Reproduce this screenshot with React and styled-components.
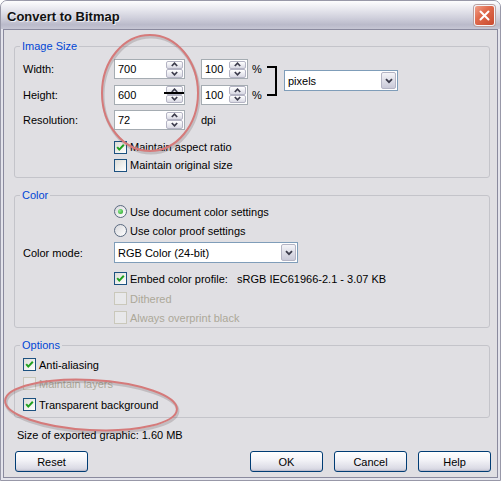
import React from 'react';
import styled, { createGlobalStyle } from 'styled-components';

const Global = createGlobalStyle`
  html, body { margin: 0; padding: 0; background: #ffffff; }
  body { font-family: "Liberation Sans", Arial, sans-serif; font-size: 11px; color: #000; }
  * { box-sizing: border-box; }
`;

const Window = styled.div`
  position: relative;
  width: 501px;
  height: 481px;
  display: flex;
  flex-direction: column;
  border: 1px solid #9898a8;
  border-radius: 7px 7px 0 0;
  overflow: hidden;
  background: #e4e4ec;
`;

const TitleBar = styled.div`
  height: 28px;
  flex: none;
  display: flex;
  align-items: center;
  padding: 2px 5px 0 6px;
  background: linear-gradient(#fdfdfe 0%, #ebebf1 25%, #d0d0dc 60%, #babaca 85%, #c6c6d4 100%);
`;

const Title = styled.div`
  font-family: "Liberation Sans", Arial, sans-serif;
  font-weight: bold;
  font-size: 13px;
  color: #111;
  text-shadow: 1px 1px 0 rgba(255, 255, 255, 0.7);
`;

const CloseButton = styled.div`
  margin-left: auto;
  width: 21px;
  height: 21px;
  margin-top: -1px;
  border: 1px solid #f4f4f8;
  border-radius: 3px;
  background: linear-gradient(135deg, #f0a08a 0%, #e06a4c 40%, #c84a30 100%);
  display: flex;
  align-items: center;
  justify-content: center;
  box-shadow: 0 0 0 1px #b9a0a0;
`;

const Frame = styled.div`
  flex: 1;
  display: flex;
  padding: 0 2px 2px 2px;
  background: #e4e4ec;
`;

const Content = styled.div`
  position: relative;
  flex: 1;
  display: flex;
  flex-direction: column;
  border: 1px solid #8a8a9e;
  background: #e0dfe3;
  padding: 10px 7px 0 10px;
`;

const Group = styled.fieldset`
  margin: ${p => p.$mt || 0}px 0 0 0;
  padding: ${p => p.$pad};
  border: 1px solid #c4c4ca;
  border-radius: 3px;
  min-width: 0;
`;

const Legend = styled.legend`
  padding: 0 2px;
  margin-left: -3px;
  color: #0046d5;
  font-size: 11px;
  line-height: 13px;
`;

const SizeGrid = styled.div`
  display: grid;
  grid-template-columns: 91px 87px 51px 15px 17px 114px;
  grid-template-rows: 20px 21px 20px;
  row-gap: 5px;
  align-items: center;
`;

const Label = styled.span`
  white-space: nowrap;
  color: ${p => (p.$disabled ? '#aca899' : '#000')};
`;

const SpinBox = styled.div`
  width: ${p => p.$w}px;
  height: 20px;
  border: 1px solid #a5acb2;
  background: #fff;
  display: flex;
  align-items: center;
  padding: 0 1px 0 3px;
`;

const SpinValue = styled.span`
  flex: 1;
`;

const SpinButtons = styled.div`
  width: 17px;
  height: 17px;
  display: flex;
  flex-direction: column;
`;

const SpinBtn = styled.div`
  flex: 1;
  border: 1px solid #b4b4c4;
  border-radius: 2px;
  background: linear-gradient(#ffffff, #d9d9e4);
  display: flex;
  align-items: center;
  justify-content: center;
`;

const Bracket = styled.div`
  grid-column: 5;
  grid-row: 1 / 3;
  align-self: center;
  width: 10px;
  height: 30px;
  margin-top: -3px;
  border: 2px solid #000;
  border-left: none;
`;

const SelectBox = styled.div`
  width: ${p => p.$w}px;
  height: 21px;
  border: 1px solid #7f9db9;
  background: #fff;
  display: flex;
  align-items: center;
  padding: 0 1px 0 3px;
  ${p => p.$area || ''}
`;

const DropBtn = styled.div`
  margin-left: auto;
  width: 15px;
  height: 17px;
  border: 1px solid #b4b4c4;
  border-radius: 2px;
  background: linear-gradient(#f4f4f8, #c9c9d8);
  display: flex;
  align-items: center;
  justify-content: center;
`;

const CheckList = styled.div`
  display: flex;
  flex-direction: column;
  margin: ${p => p.$m || '0'};
`;

const CheckRow = styled.div`
  display: flex;
  align-items: center;
  height: ${p => p.$h || 19}px;
  gap: 3px;
  white-space: nowrap;
  color: ${p => (p.$disabled ? '#aca899' : '#000')};
`;

const Box = styled.div`
  width: 13px;
  height: 13px;
  flex: none;
  border: 1px solid ${p => (p.$disabled ? '#cac8bb' : '#1c5180')};
  background: ${p => (p.$disabled ? '#e8e8ea' : 'linear-gradient(135deg, #dcdcd7, #ffffff)')};
  display: flex;
  align-items: center;
  justify-content: center;
`;

const Radio = styled.div`
  width: 13px;
  height: 13px;
  flex: none;
  border-radius: 50%;
  border: 1px solid #5a6a80;
  background: linear-gradient(135deg, #d8d8dc, #ffffff);
  display: flex;
  align-items: center;
  justify-content: center;
`;

const RadioDot = styled.div`
  width: 5px;
  height: 5px;
  border-radius: 50%;
  background: radial-gradient(circle at 35% 35%, #8fe88f, #21a121);
`;

const FieldRow = styled.div`
  display: flex;
  align-items: center;
  height: ${p => p.$h || 19}px;
  margin: ${p => p.$m || '0'};
`;

const LabelCol = styled.span`
  width: ${p => p.$w || 91}px;
  flex: none;
  white-space: nowrap;
`;

const EmbedWrap = styled.div`
  width: 123px;
  flex: none;
`;

const SizeText = styled.div`
  margin: 11px 0 0 3px;
  line-height: 13px;
`;

const ButtonRow = styled.div`
  display: flex;
  gap: 11px;
  margin: 9px -1px 0 1px;
`;

const Spacer = styled.div`
  flex: 1;
`;

const Button = styled.div`
  width: 73px;
  height: 21px;
  border: 1px solid #003c74;
  border-radius: 3px;
  background: linear-gradient(#ffffff 0%, #f4f4f8 40%, #dcdce6 85%, #c8c8d6 100%);
  display: flex;
  align-items: center;
  justify-content: center;
  box-shadow: inset 0 -1px 0 #bcbccc;
`;

const Overlay = styled.svg`
  position: absolute;
  left: 0;
  top: 0;
  pointer-events: none;
`;

const Arrow = ({ dir }) => (
  <svg width="7" height="5" viewBox="0 0 7 5">
    <path
      d={dir === 'up' ? 'M0.8 4 L3.5 1.2 L6.2 4' : 'M0.8 1 L3.5 3.8 L6.2 1'}
      fill="none"
      stroke="#3c3c4c"
      strokeWidth="1.7"
    />
  </svg>
);

const Spin = ({ value, w }) => (
  <SpinBox $w={w}>
    <SpinValue>{value}</SpinValue>
    <SpinButtons>
      <SpinBtn><Arrow dir="up" /></SpinBtn>
      <SpinBtn><Arrow dir="down" /></SpinBtn>
    </SpinButtons>
  </SpinBox>
);

const Select = ({ value, w, area }) => (
  <SelectBox $w={w} $area={area}>
    <span>{value}</span>
    <DropBtn>
      <svg width="8" height="6" viewBox="0 0 8 6">
        <path d="M1 1.2 L4 4.2 L7 1.2" fill="none" stroke="#3c3c4c" strokeWidth="1.8" />
      </svg>
    </DropBtn>
  </SelectBox>
);

const Check = ({ checked, disabled, children, h }) => (
  <CheckRow $disabled={disabled} $h={h}>
    <Box $disabled={disabled}>
      {checked && (
        <svg width="11" height="11" viewBox="0 0 11 11">
          <path d="M2.2 5.2 L4.3 7.6 L8.8 2.8" fill="none" stroke="#21a121" strokeWidth="2" />
        </svg>
      )}
    </Box>
    <span>{children}</span>
  </CheckRow>
);

const RadioOpt = ({ checked, children }) => (
  <CheckRow>
    <Radio>{checked && <RadioDot />}</Radio>
    <span>{children}</span>
  </CheckRow>
);

export default function App() {
  return (
    <>
      <Global />
      <Window>
        <TitleBar>
          <Title>Convert to Bitmap</Title>
          <CloseButton>
            <svg width="11" height="11" viewBox="0 0 11 11">
              <path d="M1.5 1.5 L9.5 9.5 M9.5 1.5 L1.5 9.5" stroke="#fff" strokeWidth="2" strokeLinecap="round" />
            </svg>
          </CloseButton>
        </TitleBar>
        <Frame>
          <Content>
            <Group $pad="6px 8px 3px 8px">
              <Legend>Image Size</Legend>
              <SizeGrid>
                <Label>Width:</Label>
                <Spin value="700" w={71} />
                <Spin value="100" w={47} />
                <Label>%</Label>
                <Bracket />
                <Select value="pixels" w={114} area="grid-column: 6; grid-row: 1 / 3; align-self: center; margin-top: -3px;" />
                <Label>Height:</Label>
                <Spin value="600" w={71} />
                <Spin value="100" w={47} />
                <Label>%</Label>
                <Label>Resolution:</Label>
                <Spin value="72" w={71} />
                <Label>dpi</Label>
              </SizeGrid>
              <CheckList $m="8px 0 0 91px">
                <Check checked h={18}>Maintain aspect ratio</Check>
                <Check h={18}>Maintain original size</Check>
              </CheckList>
            </Group>

            <Group $mt={11} $pad="0 8px 0 8px">
              <Legend>Color</Legend>
              <CheckList $m="0 0 0 91px">
                <RadioOpt checked>Use document color settings</RadioOpt>
                <RadioOpt>Use color proof settings</RadioOpt>
              </CheckList>
              <FieldRow $h={21} $m="2px 0 0 0">
                <LabelCol>Color mode:</LabelCol>
                <Select value="RGB Color (24-bit)" w={184} />
              </FieldRow>
              <FieldRow $m="6px 0 0 91px">
                <EmbedWrap>
                  <Check checked>Embed color profile:</Check>
                </EmbedWrap>
                <span>sRGB IEC61966-2.1 - 3.07 KB</span>
              </FieldRow>
              <CheckList $m="1px 0 0 91px">
                <Check disabled>Dithered</Check>
                <Check disabled>Always overprint black</Check>
              </CheckList>
            </Group>

            <Group $mt={11} $pad="3px 8px 3px 8px">
              <Legend>Options</Legend>
              <CheckList>
                <Check checked>Anti-aliasing</Check>
                <Check disabled>Maintain layers</Check>
                <CheckRow $h={2} />
                <Check checked>Transparent background</Check>
              </CheckList>
            </Group>

            <SizeText>Size of exported graphic: 1.60 MB</SizeText>

            <ButtonRow>
              <Button>Reset</Button>
              <Spacer />
              <Button>OK</Button>
              <Button>Cancel</Button>
              <Button>Help</Button>
            </ButtonRow>
          </Content>
        </Frame>
        <Overlay width="501" height="481" viewBox="0 0 501 481" style={{ left: -1, top: -1 }}>
          <ellipse cx="151" cy="95" rx="48" ry="58" fill="none" stroke="rgba(60,40,40,0.18)" strokeWidth="3" />
          <ellipse cx="150" cy="93" rx="48" ry="58" fill="none" stroke="#d57a7a" strokeWidth="2" />
          <ellipse cx="92" cy="407" rx="86" ry="25" transform="rotate(3 92 407)" fill="none" stroke="rgba(60,40,40,0.18)" strokeWidth="3" />
          <ellipse cx="91" cy="405" rx="86" ry="25" transform="rotate(3 91 405)" fill="none" stroke="#d57a7a" strokeWidth="2" />
          <line x1="164" y1="93" x2="184" y2="93" stroke="#000" strokeWidth="2" />
        </Overlay>
      </Window>
    </>
  );
}
